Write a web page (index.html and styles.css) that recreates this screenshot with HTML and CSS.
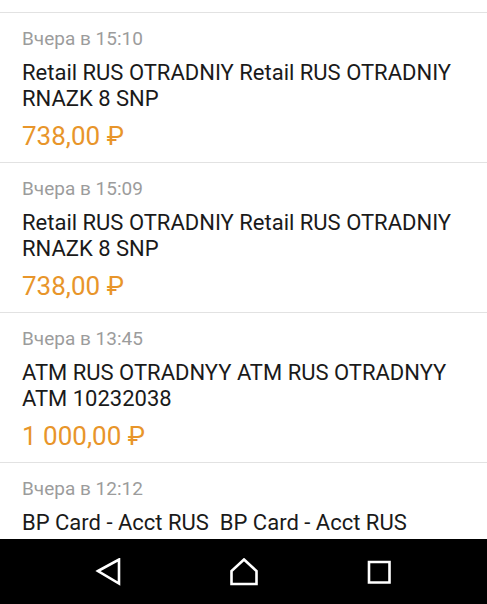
FILE: index.html
```html
<!DOCTYPE html>
<html>
<head>
  <meta charset="utf-8">
  <link rel="stylesheet" href="styles.css">
</head>
<body>
  <div class="screen">
    <div class="history">
      <div class="entry">
        <div class="entry-date">Вчера в 15:10</div>
        <div class="entry-title">Retail RUS OTRADNIY Retail RUS OTRADNIY RNAZK 8 SNP</div>
        <div class="entry-amount">738,00 ₽</div>
      </div>
      <div class="entry">
        <div class="entry-date">Вчера в 15:09</div>
        <div class="entry-title">Retail RUS OTRADNIY Retail RUS OTRADNIY RNAZK 8 SNP</div>
        <div class="entry-amount">738,00 ₽</div>
      </div>
      <div class="entry">
        <div class="entry-date">Вчера в 13:45</div>
        <div class="entry-title">ATM RUS OTRADNYY ATM RUS OTRADNYY ATM 10232038</div>
        <div class="entry-amount">1 000,00 ₽</div>
      </div>
      <div class="entry">
        <div class="entry-date">Вчера в 12:12</div>
        <div class="entry-title">BP Card - Acct RUS&nbsp; BP Card - Acct RUS</div>
      </div>
    </div>

    <div class="navbar">
      <button class="nav-btn" title="Back">
        <svg viewBox="0 0 28 28">
          <path d="M3,13 L24,1.5 L24,25.5 Z"/>
        </svg>
      </button>
      <button class="nav-btn" title="Home">
        <svg viewBox="0 0 28 28">
          <path d="M14,1.5 L26.5,13 L26.5,26 L1.5,26 L1.5,13 Z"/>
        </svg>
      </button>
      <button class="nav-btn" title="Recents">
        <svg viewBox="0 0 28 28">
          <path d="M4,4 H24.5 V24.5 H4 Z"/>
        </svg>
      </button>
    </div>
  </div>
</body>
</html>
```

FILE: styles.css
```css
body {
  margin: 0;
  padding: 0;
  font-family: Roboto, "Noto Sans", sans-serif;
  background: #fff;
}

.screen {
  width: 487px;
  height: 604px;
  display: flex;
  flex-direction: column;
  overflow: hidden;
}

.history {
  flex: 1;
  min-height: 0;
  overflow: hidden;
  padding-top: 12px;
}

.entry {
  height: 149px;
  border-top: 1px solid #e2e2e2;
  padding: 0 22px;
}

.entry-date {
  font-size: 19px;
  line-height: 24px;
  margin-top: 14px;
  color: #9c9c9c;
}

.entry-title {
  font-size: 22px;
  line-height: 26px;
  margin-top: 9px;
  color: #1a1a1a;
}

.entry-amount {
  font-size: 26px;
  line-height: 32px;
  margin-top: 8px;
  color: #e8952a;
}

.navbar {
  height: 65px;
  flex-shrink: 0;
  background: #000;
  display: flex;
  align-items: center;
  justify-content: center;
  gap: 107px;
}

.nav-btn {
  width: 28px;
  height: 28px;
  padding: 0;
  background: none;
  border: none;
}

.nav-btn svg {
  width: 28px;
  height: 28px;
  fill: none;
  stroke: #fff;
  stroke-width: 2.6;
  stroke-linejoin: miter;
}
```
